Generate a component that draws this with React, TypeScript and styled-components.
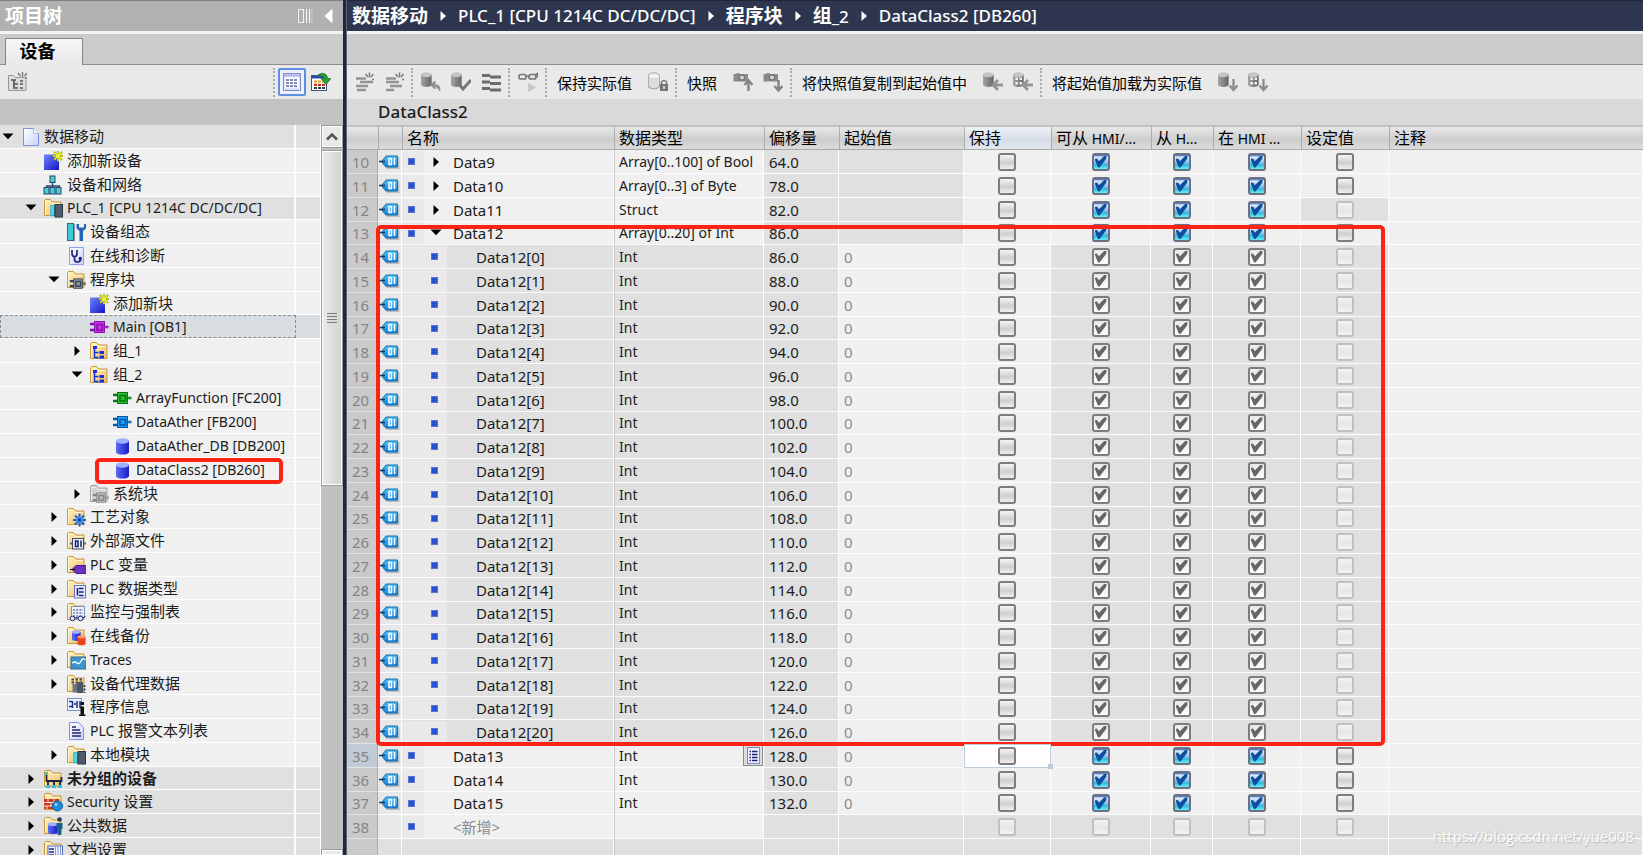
import React from "react";
import styled, { createGlobalStyle, css } from "styled-components";

const GlobalStyle = createGlobalStyle`
  * { box-sizing: border-box; }
  body {
    margin: 0;
    font-family: "Noto Sans", "Noto Sans CJK SC", sans-serif;
    font-size: 14px;
    color: #1c1c1c;
    background: #e0e0e0;
  }
  button {
    margin: 0;
    padding: 0;
    border: 0;
    background: none;
    font: inherit;
    color: inherit;
  }
  svg { display: block; flex: none; }
`;

/* ---------- frame ---------- */

const Shell = styled.div`
  display: grid;
  grid-template-columns: 343px 4px minmax(0, 1fr);
  height: 100vh;
  overflow: hidden;
`;

const Divider = styled.div`
  background: #1e2740;
  border-right: 1px solid #5d6474;
`;

const Pane = styled.div`
  display: flex;
  flex-direction: column;
  min-width: 0;
  min-height: 0;
  overflow: hidden;
`;

const TitleBar = styled.header<{ $dark?: boolean }>`
  display: flex;
  align-items: center;
  flex: none;
  height: 34px;
  padding: 0 10px 0 5px;
  border-top: 1px solid ${(p) => (p.$dark ? "#1f2638" : "#7f8089")};
  border-bottom: 3px solid #f3f3f3;
  background: ${(p) => (p.$dark ? "#2e364f" : "#b1b1b1")};
  color: #fff;
  font-size: 17px;
  white-space: nowrap;
`;

const PaneTitle = styled.h1`
  flex: 1;
  margin: 0;
  font-size: 19px;
  line-height: 26px;
  font-weight: 700;
`;

const TitleTools = styled.div`
  display: flex;
  align-items: center;
  gap: 11px;
`;

const TabStrip = styled.div`
  display: flex;
  align-items: flex-end;
  flex: none;
  height: 31px;
  padding-left: 5px;
  background: #cbcbcb;
  border-bottom: 1px solid #8e8e8e;
`;

const Tab = styled.button`
  width: 78px;
  height: 27px;
  margin-bottom: -1px;
  padding: 0 13px 2px 0;
  border: 1px solid #858585;
  border-bottom: 0;
  background: linear-gradient(#f6f6f6, #e9e9e9);
  color: #000;
  font-size: 18px;
  line-height: 24px;
  font-weight: 700;
`;

const Toolbar = styled.div`
  display: flex;
  align-items: center;
  flex: none;
  height: 34px;
  padding: 0 2px;
  background: #e9e9e9;
  font-size: 15px;
  white-space: nowrap;
`;

const ToolButton = styled.button<{ $active?: boolean }>`
  display: grid;
  place-items: center;
  flex: none;
  width: ${(p) => (p.$active ? "28px" : "30px")};
  height: 28px;
  border: ${(p) => (p.$active ? "2px solid #5f8fe0" : "0")};
  border-radius: 2px;
  background: ${(p) => (p.$active ? "#eef1fb" : "none")};
`;

const ToolSeparator = styled.span`
  flex: none;
  width: 1px;
  height: 29px;
  margin: 0 3px 0 2px;
  border-left: 2px dotted #a9a9a9;
`;

const ToolText = styled.span`
  padding: 2px 11px 0 7px;
  line-height: 22px;
  color: #000;
`;

const Spacer = styled.span`
  flex: 1;
`;

const ToolbarEnd = styled.span`
  flex: none;
  width: 5px;
`;

const Band = styled.div<{ $light?: boolean }>`
  flex: none;
  height: 26px;
  padding-left: 31px;
  background: ${(p) => (p.$light ? "#d9d9d9" : "#c2c2c2")};
  font-size: 17px;
  line-height: 26px;
  font-weight: 500;
`;

const Cjk = styled.span<{ $size: number }>`
  font-size: ${(p) => p.$size}px;
`;

/* Chinese runs are set slightly larger than the Latin runs beside them. */
function MixedText({ text, size }: { text: string; size: number }) {
  return (
    <>
      {text.split(/([\u4e00-\u9fff]+)/).map((run, i) =>
        i % 2 ? (
          <Cjk key={i} $size={size}>
            {run}
          </Cjk>
        ) : (
          run
        ),
      )}
    </>
  );
}

/* ---------- icons ---------- */

const Svg = ({ children, w = 20, h = 20 }: { children: React.ReactNode; w?: number; h?: number }) => (
  <svg width={w} height={h} viewBox={`0 0 ${w} ${h}`} aria-hidden="true">
    {children}
  </svg>
);

const CaretRight = ({ color = "#000" }: { color?: string }) => (
  <Svg w={12} h={12}>
    <path d="M3.5 1L9 6 3.5 11z" fill={color} />
  </Svg>
);
const CaretDown = () => (
  <Svg w={12} h={12}>
    <path d="M.5 2.500h11L6 8.300z" fill="#000" />
  </Svg>
);

const HiddenSvg = styled.svg`
  position: absolute;
`;

const Defs = () => (
  <HiddenSvg width="0" height="0" aria-hidden="true">
    <defs>
      <linearGradient id="folder" x1="0" y1="0" x2="1" y2="1">
        <stop offset="0" stopColor="#fff0bd" />
        <stop offset="1" stopColor="#ecc065" />
      </linearGradient>
      <linearGradient id="blue" x1="0" y1="0" x2="1" y2="1">
        <stop offset="0" stopColor="#6f86ff" />
        <stop offset="1" stopColor="#1414c4" />
      </linearGradient>
      <linearGradient id="cylinder" x1="0" y1="0" x2="1" y2="0">
        <stop offset="0" stopColor="#5a6cf5" />
        <stop offset="1" stopColor="#1a1ec8" />
      </linearGradient>
      <linearGradient id="grey" x1="0" y1="0" x2="1" y2="0">
        <stop offset="0" stopColor="#a5a5a5" />
        <stop offset="1" stopColor="#666" />
      </linearGradient>
      <linearGradient id="page" x1="0" y1="0" x2="1" y2="1">
        <stop offset="0" stopColor="#fff" />
        <stop offset="1" stopColor="#c9d2fb" />
      </linearGradient>
      <linearGradient id="tag" x1="0" y1="0" x2="0" y2="1">
        <stop offset="0" stopColor="#4ec3f7" />
        <stop offset="1" stopColor="#0f7fdc" />
      </linearGradient>
    </defs>
  </HiddenSvg>
);

const Folder = ({ children, grey }: { children?: React.ReactNode; grey?: boolean }) => (
  <Svg>
    <path
      d="M1.500 17.500v-15l1-1h5l2 2.500h8.500v13.500z"
      fill={grey ? "#d2d2d2" : "url(#folder)"}
      stroke={grey ? "#a2a2a2" : "#c9983a"}
    />
    <path d="M2.500 16.500v-13h4.500l2 2h8" fill="none" stroke={grey ? "#ececec" : "#fff6d2"} />
    {children}
  </Svg>
);

/* Program block: a thick frame with two pins on the left and one on the right. */
const Block = ({ a, b }: { a: string; b: string }) => (
  <>
    <path d="M1 7h5M1 13h5M15 10h4.500" stroke={b} strokeWidth="2.600" />
    <path d="M15 10h4" stroke={a} strokeWidth="1" />
    <rect x="5" y="4" width="11" height="12" fill={b} />
    <rect x="6" y="5" width="9" height="10" fill={a} />
    <rect x="8" y="7.500" width="5.500" height="5.500" fill={a} stroke={b} strokeWidth="1.600" />
  </>
);

const Cylinder = ({ x = 0, y = 0, fill = "url(#cylinder)", top = "#9fb0ff" }) => (
  <g transform={`translate(${x} ${y})`}>
    <path d="M0 2.500v11.500c0 1.500 2.700 2.600 6.500 2.600S13 15.500 13 14V2.500z" fill={fill} />
    <ellipse cx="6.500" cy="3" rx="6.500" ry="2.700" fill={top} />
  </g>
);

const Spark = ({ x, y }: { x: number; y: number }) => (
  <g transform={`translate(${x} ${y})`}>
    <path d="M0-5v10.500M-5.500 0h10.500M-4-4l8 8M4-4l-8 8" stroke="#8b9a00" strokeWidth="2" />
    <path d="M0-4.500v9.500M-5 0h9.500M-3.500-3.500l7 7M3.500-3.500l-7 7" stroke="#f6f23c" strokeWidth="1.200" />
  </g>
);

const Module = () => (
  <>
    <rect x="7" y="7" width="6" height="11.500" fill="#2b8f98" stroke="#d8eef0" strokeWidth=".6" />
    <rect x="8" y="8" width="3" height="9.500" fill="#4fd6de" />
    <rect x="12" y="6.500" width="7.500" height="12.500" fill="#4f5b6d" stroke="#2c3543" />
  </>
);

const icons: Record<string, React.ReactNode> = {
  project: (
    <Svg>
      <path d="M3.500 1.500h10l5 5v12h-15z" fill="url(#page)" stroke="#7f8fe6" />
      <path d="M13.500 1.500v5h5" fill="#fff" stroke="#a8b4f0" />
    </Svg>
  ),
  add: (
    <Svg>
      <rect x="1" y="3.500" width="15" height="15.500" fill="url(#blue)" />
      <Spark x={15} y={5} />
    </Svg>
  ),
  network: (
    <Svg>
      <path d="M9.500 6v5M3.500 14v-3h13v3M9.500 11v3" fill="none" stroke="#30456b" strokeWidth="1.300" />
      {[[7, 1], [1, 12.5], [7, 12.5], [13, 12.5]].map(([x, y]) => (
        <rect key={`${x}-${y}`} x={x} y={y} width="5" height="6.500" fill="#47cfd8" stroke="#2c4268" />
      ))}
    </Svg>
  ),
  plc: (
    <Folder>
      <Module />
    </Folder>
  ),
  config: (
    <Svg>
      <rect x="1.500" y="1.500" width="6" height="17" fill="#3bc9d3" stroke="#35687c" />
      <path d="M8.500 2v17" stroke="#8a98a5" />
      <path d="M10.500 2v4.500l3 2.500v10h3.500V9l3-2.500V2h-2v3.500h-5V2z" fill="#2364b8" />
    </Svg>
  ),
  diagnose: (
    <Svg>
      <path d="M3.500 1.500h14v17h-14z" fill="url(#page)" stroke="#8f9dea" />
      <path d="M6 4v3.500q0 3 2.500 3t2.500-3V4M8.500 10.500v3q0 2.500 3 2.500t3-3" fill="none" stroke="#20247e" strokeWidth="1.700" />
      <circle cx="14.300" cy="12.500" r="1.700" fill="#20247e" />
    </Svg>
  ),
  blocks: (
    <Folder>
      <g transform="translate(3 5) scale(.86)">
        <Block a="#8b96a4" b="#39434f" />
      </g>
    </Folder>
  ),
  main: (
    <Svg>
      <Block a="#d02df2" b="#8712a8" />
    </Svg>
  ),
  fc: (
    <Svg>
      <Block a="#28c22f" b="#12701a" />
    </Svg>
  ),
  fb: (
    <Svg>
      <Block a="#1f9df5" b="#0a55a8" />
    </Svg>
  ),
  db: (
    <Svg>
      <Cylinder x={4} y={2} />
    </Svg>
  ),
  group: (
    <Folder>
      <path d="M5.500 7v9.500h4M5.500 11.500h4" fill="none" stroke="#1a2fe0" strokeWidth="1.500" />
      <path d="M4 6.500h4M10.500 11.500h4.500M10.500 16h4.500" stroke="#1a2fe0" strokeWidth="3" />
    </Folder>
  ),
  system: (
    <Folder grey>
      <g transform="translate(3 5) scale(.86)">
        <Block a="#bdbdbd" b="#858585" />
      </g>
    </Folder>
  ),
  tech: (
    <Folder>
      <path d="M13.500 6.500v13M7 13h13M9 8.500l9 9M18 8.500l-9 9" stroke="#1d62cf" strokeWidth="2" />
      <circle cx="13.500" cy="13" r="3.600" fill="#3b8cf0" />
      <circle cx="13.500" cy="13" r="1.400" fill="#0c2f7a" />
    </Folder>
  ),
  source: (
    <Folder>
      <path d="M4 12.500h16" stroke="#56617a" strokeWidth="2" />
      <rect x="6.500" y="7.500" width="11" height="10.500" fill="#e8edfa" stroke="#3e4a68" />
      <path d="M9.500 10v5.500h2.500V10zM15 9.500v6.500" fill="none" stroke="#1c2569" strokeWidth="1.500" />
    </Folder>
  ),
  tags: (
    <Folder>
      <path d="M6 14.500l4-4h10v8H10z" fill="#6a31c2" stroke="#4a1b93" />
      <path d="M4 14.500h5" stroke="#111" />
    </Folder>
  ),
  types: (
    <Folder>
      <rect x="8.500" y="6.500" width="11" height="12.500" fill="#e3e8ff" stroke="#6673c8" />
      <path d="M11.500 9v7.500M13 9.500h4.500M13 13h4.500M13 16.500h4.500" stroke="#1b2270" strokeWidth="1.600" />
    </Folder>
  ),
  watch: (
    <Folder>
      <rect x="5.500" y="4.500" width="13" height="11" fill="#eef1fb" stroke="#8791b8" />
      <path d="M7 8h10M7 11h10M7 14h10" stroke="#6a76b0" strokeDasharray="2 1.200" strokeWidth="1.500" />
      <circle cx="6.500" cy="16.500" r="2.300" fill="#dfe6ff" stroke="#24307c" />
      <circle cx="14.500" cy="16.500" r="2.300" fill="#dfe6ff" stroke="#24307c" />
      <path d="M9 16h3M17 15.500l2.500-1" stroke="#24307c" />
    </Folder>
  ),
  backup: (
    <Folder>
      <g transform="translate(6 4) scale(.66)">
        <Cylinder />
      </g>
      <g transform="translate(11.500 9) scale(.62)">
        <Cylinder fill="#e8461a" top="#ff9a6a" />
      </g>
    </Folder>
  ),
  traces: (
    <Folder>
      <rect x="5" y="7" width="15" height="12" fill="#3f93cc" stroke="#2b6f9f" />
      <path d="M6 13q3-2 5 0t4-2 4.500-1" fill="none" stroke="#fff" strokeWidth="1.300" />
    </Folder>
  ),
  proxy: (
    <Folder>
      <path d="M5.500 5.500h11M5.500 8.500h11" stroke="#39434f" strokeWidth="1.800" strokeDasharray="2.500 1.500" />
      <rect x="6.500" y="10" width="4.500" height="8.500" fill="#6b7685" />
      <rect x="11" y="8" width="6" height="11" fill="#4a5565" />
      <path d="M18.500 11v8" stroke="#39434f" strokeWidth="1.800" strokeDasharray="2 1.500" />
    </Folder>
  ),
  info: (
    <Svg>
      <rect x="1.500" y="1.500" width="14" height="12" fill="#eaf0ff" stroke="#7e93c9" />
      <path d="M3 4.500h3M3 9.500h3M6.500 4v7M8 7h2M11 4v7M14 4v6" stroke="#1f2d86" strokeWidth="1.500" />
      <path d="M13.500 9.500h4.500v8h1.500V19h-6.500v-1.500H14.500v-6h-1zM14.500 5h3.500v3h-3.500z" fill="#111" />
    </Svg>
  ),
  textlist: (
    <Svg>
      <path d="M3.500 1.500h9l5 5v12h-14z" fill="url(#page)" stroke="#7f8fe6" />
      <path d="M6 6h4M6 9h8M6 12h9M6 15h9" stroke="#1d256f" strokeWidth="1.600" />
    </Svg>
  ),
  modules: (
    <Folder>
      <Module />
    </Folder>
  ),
  ungrouped: (
    <Folder>
      <path d="M3.500 4v8h15V8M5 12v4M11 12v4M17 12v4" fill="none" stroke="#1b2444" strokeWidth="1.800" />
      <path d="M3 17.500h4M9 17.500h4M15 17.500h4M2 4.500h3" stroke="#3cc3d0" strokeWidth="3" />
    </Folder>
  ),
  security: (
    <Folder>
      <rect x="1" y="7" width="15" height="10" fill="#c9371f" />
      <path d="M1 10.500h15M1 14h15M5 7v3M11 7v3M8 11v3M4 14v3M11 14v3" stroke="#f5e3da" />
      <circle cx="14.500" cy="14" r="5" fill="#1c8ddb" stroke="#0c5ea0" />
      <circle cx="13" cy="12.500" r="1.600" fill="#8ed2ff" />
    </Folder>
  ),
  common: (
    <Folder>
      <g transform="translate(5 6) scale(.74)">
        <Cylinder />
      </g>
      <circle cx="16.500" cy="3.500" r="2.200" fill="#23374f" />
      <path d="M13.500 7h6v6h-1.200v6h-3.600v-6h-1.200z" fill="#17608f" />
    </Folder>
  ),
  docs: (
    <Folder>
      <rect x="5" y="6" width="14.500" height="12.500" fill="#eef1ff" stroke="#5868b8" />
      <path d="M6 9h5M6 12h5M6 15h5" stroke="#232c80" strokeWidth="1.600" />
      <path d="M12.500 7v11M15 7v11M17.500 7v11" stroke="#8d99d4" />
    </Folder>
  ),
};

const NewFolderIcon = () => (
  <Svg>
    <path d="M1.500 18.500v-15h5l2 2h10.500v13z" fill="#dedede" stroke="#979797" />
    <path d="M4 8h5M7 8v8h4M7 12h4M13 9h3M13 12h3M13 16h3" fill="none" stroke="#555" strokeWidth="1.700" />
    <path d="M15.500 0v5M11 1l2.500 3M20 1l-2.500 3M18.500 6h1.500" stroke="#777" strokeWidth="1.400" />
  </Svg>
);
const ListViewIcon = () => (
  <Svg>
    <rect x="1.500" y="1.500" width="17" height="17" fill="#dfe4fa" stroke="#7b8bd0" />
    <path d="M2 3.500h16" stroke="#aab4e4" strokeWidth="2" />
    <rect x="3" y="5.500" width="14" height="10" fill="#fff" />
    <path d="M4 8h12M4 11h12M4 14h12" stroke="#5a659c" strokeWidth="1.300" strokeDasharray="3 1" />
  </Svg>
);
const ExportIcon = () => (
  <Svg>
    <rect x=".5" y="3.500" width="15" height="15" fill="#fff" stroke="#34548c" />
    <path d="M1 5h14" stroke="#2c4f9a" strokeWidth="3" />
    <path d="M3 9.500h11" stroke="#e8a02c" strokeWidth="2.200" strokeDasharray="3 1" />
    <path d="M3 12.800h11" stroke="#c2381d" strokeWidth="2.200" strokeDasharray="3 1" />
    <path d="M3 16h11" stroke="#3c3c3c" strokeWidth="2.200" strokeDasharray="3 1" />
    <path d="M7 3q7-5 10 3.500h3l-5 6-5-6h3q-1-3-6-3.500z" fill="#2c9c3a" stroke="#176b25" strokeWidth=".7" />
  </Svg>
);
const RowInsertIcon = ({ lower }: { lower?: boolean }) => (
  <Svg>
    <path
      d={lower ? "M2 6.500h10M2 10h13M6 14h12M2 18h8" : "M2 6.500h10M6 10h13M2 14h12M3 18h9"}
      stroke="#939393"
      strokeWidth="2.600"
    />
    <path d="M15.500.500v5M11.500 2l2.500 3M19.500 2l-2.500 3M18 7.500h2" stroke="#7b7b7b" strokeWidth="1.500" />
  </Svg>
);
const GreyDb = ({ children, pale, dots }: { children?: React.ReactNode; pale?: boolean; dots?: boolean }) => (
  <Svg>
    <g transform={pale ? "translate(0 0) scale(.92 1.050)" : "translate(0 0) scale(.82 .9)"}>
      <Cylinder fill={pale ? "#dcdcdc" : "url(#grey)"} top={pale ? "#f3f3f3" : "#c4c4c4"} />
      {pale && (
        <path d="M.5 3v11q6 4 12 0V3M.5 3q6-4.500 12 0" fill="none" stroke="#a8a8a8" />
      )}
      {dots && <path d="M3 7.500h3M3 12.500h3M8 7.500h3M8 12.500h3" stroke="#f2f2f2" strokeWidth="2.600" />}
    </g>
    {children}
  </Svg>
);
const ArrowDown = <path d="M15.500 7v10M11.500 13.500l4 4.500 4-4.500" stroke="#8c8c8c" strokeWidth="2.300" fill="none" />;
const ArrowLeft = <path d="M20 13h-8M15 8l-5 5 5 5" stroke="#949494" strokeWidth="2.800" fill="none" />;
const Lines = () => (
  <Svg>
    <path d="M1 3.500h8M9 5h11M1 10h8M9 11.500h11M1 16.500h8M9 18h11" stroke="#6c6c6c" strokeWidth="3" />
  </Svg>
);
const Glasses = () => (
  <Svg>
    <rect x="1" y="2.500" width="7" height="4.500" rx="2" fill="none" stroke="#777" strokeWidth="1.700" />
    <rect x="11" y="2.500" width="7" height="4.500" rx="2" fill="none" stroke="#777" strokeWidth="1.700" />
    <path d="M8 4h3M17 3l2.500-1.500v4" stroke="#777" strokeWidth="1.500" fill="none" />
    <path d="M10.500 11.500l7 4-7 4z" fill="#c8c8c8" stroke="#b4b4b4" strokeWidth=".5" />
  </Svg>
);
const Camera = ({ up }: { up?: boolean }) => (
  <Svg>
    <path d="M.5 2h3V1h3v1h8.500v7.500H.5z" fill="#8a8a8a" />
    <circle cx="9" cy="5.500" r="2.600" fill="#d5d5d5" stroke="#606060" />
    <path
      d={up ? "M15.500 19V9M11.500 13l4-4.500 4 4.500" : "M15.500 8v10M11.500 14l4 4.500 4-4.500"}
      fill="none"
      stroke="#858585"
      strokeWidth="2.500"
    />
  </Svg>
);
const TagIcon = () => (
  <Svg w={22} h={14}>
    <path d="M8 1.500h12.500v11.500H8L3.500 8.500v-2z" fill="#7e8a94" opacity=".45" transform="translate(1 1)" />
    <path d="M8 1h11.500v11H8L3.500 6.500z" fill="url(#tag)" stroke="#1d6fae" />
    <path d="M1 6.500h6" stroke="#123a5c" strokeWidth="1.500" />
    <path d="M11 3.500h2.500v6H11zM16.500 3v7" fill="none" stroke="#fff" strokeWidth="1.500" />
  </Svg>
);
const TypePickerIcon = () => (
  <Svg w={13} h={17}>
    <rect x=".5" y=".5" width="12" height="16" fill="#eef0ff" stroke="#7a86dc" />
    <path d="M5 4.500h5.500M5 7.500h5.500M5 10.500h5.500M5 13.500h5.500M2.500 4.500h1.500M2.500 7.500h1.500M2.500 10.500h1.500M2.500 13.500h1.500" stroke="#1c2470" strokeWidth="1.500" />
  </Svg>
);

/* ---------- project tree ---------- */

type Node = {
  label: string;
  icon: string;
  level: number;
  open?: boolean;
  shade?: boolean;
  bold?: boolean;
  selected?: boolean;
  marked?: boolean;
};

const nodes: Node[] = [
  { label: "数据移动", icon: "project", level: 0, open: true, shade: true },
  { label: "添加新设备", icon: "add", level: 1 },
  { label: "设备和网络", icon: "network", level: 1 },
  { label: "PLC_1 [CPU 1214C DC/DC/DC]", icon: "plc", level: 1, open: true, shade: true },
  { label: "设备组态", icon: "config", level: 2 },
  { label: "在线和诊断", icon: "diagnose", level: 2 },
  { label: "程序块", icon: "blocks", level: 2, open: true },
  { label: "添加新块", icon: "add", level: 3 },
  { label: "Main [OB1]", icon: "main", level: 3, selected: true },
  { label: "组_1", icon: "group", level: 3, open: false },
  { label: "组_2", icon: "group", level: 3, open: true },
  { label: "ArrayFunction [FC200]", icon: "fc", level: 4 },
  { label: "DataAther [FB200]", icon: "fb", level: 4 },
  { label: "DataAther_DB [DB200]", icon: "db", level: 4 },
  { label: "DataClass2 [DB260]", icon: "db", level: 4, marked: true },
  { label: "系统块", icon: "system", level: 3, open: false },
  { label: "工艺对象", icon: "tech", level: 2, open: false },
  { label: "外部源文件", icon: "source", level: 2, open: false },
  { label: "PLC 变量", icon: "tags", level: 2, open: false },
  { label: "PLC 数据类型", icon: "types", level: 2, open: false },
  { label: "监控与强制表", icon: "watch", level: 2, open: false },
  { label: "在线备份", icon: "backup", level: 2, open: false },
  { label: "Traces", icon: "traces", level: 2, open: false },
  { label: "设备代理数据", icon: "proxy", level: 2, open: false },
  { label: "程序信息", icon: "info", level: 2 },
  { label: "PLC 报警文本列表", icon: "textlist", level: 2 },
  { label: "本地模块", icon: "modules", level: 2, open: false },
  { label: "未分组的设备", icon: "ungrouped", level: 1, open: false, shade: true, bold: true },
  { label: "Security 设置", icon: "security", level: 1, open: false, shade: true },
  { label: "公共数据", icon: "common", level: 1, open: false, shade: true },
  { label: "文档设置", icon: "docs", level: 1, open: false, shade: true },
];

const TreeArea = styled.div`
  display: flex;
  flex: 1;
  min-height: 0;
  background: #f0f0f0;
`;

const Tree = styled.ul`
  flex: 1;
  min-width: 0;
  margin: 0;
  padding: 0;
  list-style: none;
  overflow: hidden;
`;

const TreeRow = styled.li<{ $shade?: boolean; $selected?: boolean }>`
  position: relative;
  display: grid;
  grid-template-columns: minmax(0, 1fr) 24px;
  height: 24px;
  border-bottom: 1px solid #fff;
  background: ${(p) => (p.$selected ? "#d7dde1" : p.$shade ? "#e0e0e0" : "#f0f0f0")};
  &:nth-child(4n) { height: 23px; }
`;

const TreeCell = styled.div<{ $level: number; $selected?: boolean }>`
  display: flex;
  align-items: center;
  padding-left: ${(p) => p.$level * 23}px;
  border-right: 2px solid #fcfcfc;
  white-space: nowrap;
  ${(p) =>
    p.$selected &&
    css`
      outline: 1px dashed #8b8b8b;
      outline-offset: -1px;
      border-right-color: transparent;
    `}
`;

const Toggle = styled.button`
  display: grid;
  place-items: center;
  flex: none;
  width: 15px;
  height: 20px;
`;

const TogglePlace = styled.span`
  flex: none;
  width: 15px;
`;

const TreeLabel = styled.a<{ $bold?: boolean }>`
  display: flex;
  align-items: center;
  gap: 4px;
  padding-left: 5px;
  line-height: 22px;
  color: #1c1c1c;
  font-weight: ${(p) => (p.$bold ? 700 : 400)};
  text-decoration: none;
`;

const Marker = styled.div`
  position: absolute;
  border: 4px solid #fd2314;
  border-radius: 5px;
  pointer-events: none;
`;

const RowMarker = styled(Marker)`
  inset: 0 37px -3px 95px;
  z-index: 1;
`;

const Scrollbar = styled.div`
  display: flex;
  flex-direction: column;
  flex: none;
  width: 23px;
  border-left: 1px solid #fff;
  background: #c1c1c1;
`;

const ScrollButton = styled.button`
  display: grid;
  place-items: center;
  height: 23px;
  flex: none;
  border: 1px solid #9c9c9c;
  box-shadow: inset 0 0 0 1px #fff;
  background: #e9e9e9;
`;

const Thumb = styled.div`
  display: grid;
  place-items: center;
  flex: 0 0 46%;
  margin-top: 2px;
  border: 1px solid #9c9c9c;
  box-shadow: inset 0 0 0 1px #fff;
  background: linear-gradient(90deg, #e9e9e9, #d3d3d3);
`;

const TrackRest = styled.div`
  flex: 1;
`;

/* Bottom button of the scroll bar, cut by the window edge. */
const BottomButton = styled(ScrollButton)`
  height: 6px;
  border-bottom: 0;
`;

function ProjectTree() {
  return (
    <Pane>
      <TitleBar>
        <PaneTitle>项目树</PaneTitle>
        <TitleTools>
          <button aria-label="布局">
            <Svg w={16} h={16}>
              <path d="M1.500 1.500h5v13h-5zM9.500 1v14M12.500 1v14" fill="none" stroke="#f4f4f4" />
              <path d="M15 1v14" stroke="#d0d0d0" />
            </Svg>
          </button>
          <button aria-label="折叠">
            <Svg w={9} h={16}>
              <path d="M8.500.500v15L.5 8z" fill="#fff" />
            </Svg>
          </button>
        </TitleTools>
      </TitleBar>
      <TabStrip>
        <Tab>设备</Tab>
      </TabStrip>
      <Toolbar>
        <ToolButton aria-label="新建组">
          <NewFolderIcon />
        </ToolButton>
        <Spacer />
        <ToolSeparator />
        <ToolButton $active aria-label="列表视图">
          <ListViewIcon />
        </ToolButton>
        <ToolButton aria-label="导出">
          <ExportIcon />
        </ToolButton>
        <ToolbarEnd />
      </Toolbar>
      <Band />
      <TreeArea>
        <Tree>
          {nodes.map((n) => (
            <TreeRow key={n.label} $shade={n.shade} $selected={n.selected}>
              <TreeCell $level={n.level} $selected={n.selected}>
                {n.open === undefined ? (
                  <TogglePlace />
                ) : (
                  <Toggle aria-label={n.label} aria-expanded={n.open}>
                    {n.open ? <CaretDown /> : <CaretRight />}
                  </Toggle>
                )}
                <TreeLabel href="#" $bold={n.bold}>
                  {icons[n.icon]}
                  <span>
                    <MixedText text={n.label} size={15} />
                  </span>
                </TreeLabel>
              </TreeCell>
              {n.marked && <RowMarker />}
            </TreeRow>
          ))}
        </Tree>
        <Scrollbar>
          <ScrollButton aria-label="向上">
            <Svg w={12} h={9}>
              <path d="M1 7.500l5-5 5 5" fill="none" stroke="#555" strokeWidth="2.600" />
            </Svg>
          </ScrollButton>
          <Thumb>
            <Svg w={12} h={11}>
              <path d="M1 1.500h10M1 4.500h10M1 7.500h10M1 10.500h10" stroke="#7c7c7c" />
            </Svg>
          </Thumb>
          <TrackRest />
          <BottomButton aria-label="向下" />
        </Scrollbar>
      </TreeArea>
    </Pane>
  );
}

/* ---------- breadcrumb ---------- */

const Crumbs = styled.nav`
  display: flex;
  align-items: center;
  gap: 9px;
  line-height: 26px;
`;

const Crumb = styled.a`
  color: #fff;
  font-weight: 500;
  text-decoration: none;
  & > span { font-weight: 700; }
`;

const crumbs = ["数据移动", "PLC_1 [CPU 1214C DC/DC/DC]", "程序块", "组_2", "DataClass2 [DB260]"];

/* ---------- data block table ---------- */

const TableArea = styled.div`
  position: relative;
  flex: 1;
  min-height: 0;
  overflow: hidden;
  background: #e0e0e0;
`;

const Grid = styled.table`
  width: 100%;
  table-layout: fixed;
  border-collapse: separate;
  border-spacing: 0;
`;

const Col = styled.col<{ $w?: number }>`
  width: ${(p) => (p.$w ? `${p.$w}px` : "auto")};
`;

const HeadCell = styled.th<{ $active?: boolean }>`
  height: 25px;
  padding: 0 0 0 4px;
  border-top: 2px solid #c3c3c3;
  border-bottom: 1px solid #aaa;
  border-left: 1px solid #adadad;
  background: ${(p) =>
    p.$active
      ? "linear-gradient(#eef1f6, #d6dde7 60%, #e2e7ee)"
      : "linear-gradient(#e8e8e8, #cdcdcd 60%, #dcdcdc)"};
  color: #000;
  font-size: 14px;
  line-height: 20px;
  font-weight: 400;
  text-align: left;
  white-space: nowrap;
  overflow: hidden;
  &:first-child { border-left: 0; }
`;

const BodyRow = styled.tr`
  height: 24px;
  &:nth-child(4n) { height: 23px; }
`;

const Cell = styled.td<{ $dim?: boolean; $muted?: boolean; $edge?: boolean }>`
  padding: 0 0 0 5px;
  border-right: 1px solid #fdfdfd;
  border-bottom: 1px solid #fdfdfd;
  ${(p) => p.$edge && "border-left: 1px solid #c6c6c6; padding-left: 4px;"}
  background: ${(p) => (p.$dim ? "#e0e0e0" : "#f0f0f0")};
  color: ${(p) => (p.$muted ? "#8b8b8b" : "#1c1c1c")};
  line-height: 20px;
  white-space: nowrap;
`;

const NumberCell = styled.th<{ $current?: boolean }>`
  padding: 0 0 0 5px;
  border-right: 1px solid #a9a9a9;
  border-bottom: 1px solid #e2e2e2;
  background: ${(p) => (p.$current ? "#c0cbd6" : "#cacaca")};
  color: #858585;
  font-size: 15px;
  line-height: 20px;
  font-weight: 400;
  text-align: left;
`;

const ValueCell = styled(Cell)`
  font-size: 15px;
`;

const IconCell = styled(Cell)`
  padding-left: 0;
  background: #e8e8e8;
`;

const NameCell = styled(Cell)`
  padding: 0;
`;

const NameLine = styled.div`
  display: flex;
  align-items: center;
  height: 22px;
`;

const Guide = styled.span<{ $level: number }>`
  display: flex;
  align-items: center;
  justify-content: flex-end;
  flex: none;
  align-self: stretch;
  width: ${(p) => (p.$level ? 45 : 22)}px;
  padding-right: 9px;
  background: #e9e9e9;
`;

const Bullet = styled.i`
  width: 7px;
  height: 7px;
  background: #2b50d0;
  border: 1px solid #5873d2;
`;

const ToggleSlot = styled.span`
  display: flex;
  flex: none;
  width: 29px;
  padding-left: 4px;
`;

const Name = styled.span<{ $muted?: boolean }>`
  color: ${(p) => (p.$muted ? "#8b8b8b" : "#1c1c1c")};
  font-size: 15px;
`;

const TypeLine = styled.div`
  display: flex;
  align-items: center;
  justify-content: space-between;
  height: 22px;
`;

const PickerButton = styled.button`
  display: grid;
  place-items: center;
  width: 20px;
  height: 21px;
  border: 1px solid #8d8d8d;
  background: #dcdcdc;
`;

const CheckCell = styled(Cell)<{ $current?: boolean }>`
  position: relative;
  padding: 0;
  text-align: center;
  ${(p) =>
    p.$current &&
    css`
      z-index: 1;
      background: #fff;
      outline: 1px solid #bccbd9;
      outline-offset: -1px;
      &::after {
        content: "";
        position: absolute;
        right: -3px;
        bottom: -2px;
        width: 5px;
        height: 5px;
        background: #bccbd9;
      }
    `}
`;

type BoxState = "blue" | "grey" | "empty" | "faint";

const boxLook = {
  blue: "border-color: #6a7180; background: linear-gradient(#2d5cb8, #dfeafc 2px, #a8c8f0 45%, #35b6dc 70%, #66f0f4); --tick: #0b4f9e;",
  grey: "border-color: #7d7d7d; background: linear-gradient(#e9e9e9, #fdfdfd); --tick: #666;",
  empty: "border-color: #7d7d7d; background: linear-gradient(#f6f6f6, #cfcfcf 55%, #f0f0f0); --tick: transparent;",
  faint: "border-color: #c0c0c0; background: linear-gradient(#f3f3f3, #e6e6e6 55%, #f3f3f3); --tick: transparent;",
};

const Box = styled.input<{ $state: BoxState }>`
  appearance: none;
  display: block;
  width: 18px;
  height: 18px;
  margin: 1px auto;
  border: 2px solid;
  border-radius: 3px;
  ${(p) => boxLook[p.$state]}
  &::before {
    content: "";
    display: block;
    width: 12px;
    height: 12px;
    margin: 1px;
    background: var(--tick);
    clip-path: polygon(0 30%, 20% 26%, 37% 48%, 82% 2%, 100% 4%, 98% 28%, 42% 100%, 28% 98%);
  }
`;

const TableMarker = styled(Marker)`
  top: 100px;
  left: 29px;
  width: 1009px;
  height: 521px;
`;

const Watermark = styled.span`
  position: absolute;
  right: 9px;
  bottom: 8px;
  color: #fafafa;
  font-family: "Open Sans", sans-serif;
  font-size: 15px;
  line-height: 22px;
  text-shadow: 1px 1px 1px #b8b8b8;
`;

type Variable = {
  no: number;
  name: string;
  type: string;
  offset: string;
  start: string;
  child?: boolean;
  open?: boolean;
  isNew?: boolean;
  current?: boolean;
};

const variables: Variable[] = [
  { no: 10, name: "Data9", type: "Array[0..100] of Bool", offset: "64.0", start: "", open: false },
  { no: 11, name: "Data10", type: "Array[0..3] of Byte", offset: "78.0", start: "", open: false },
  { no: 12, name: "Data11", type: "Struct", offset: "82.0", start: "", open: false },
  { no: 13, name: "Data12", type: "Array[0..20] of Int", offset: "86.0", start: "", open: true },
  ...Array.from({ length: 21 }, (_, i) => ({
    no: 14 + i,
    name: `Data12[${i}]`,
    type: "Int",
    offset: `${86 + 2 * i}.0`,
    start: "0",
    child: true,
  })),
  { no: 35, name: "Data13", type: "Int", offset: "128.0", start: "0", current: true },
  { no: 36, name: "Data14", type: "Int", offset: "130.0", start: "0" },
  { no: 37, name: "Data15", type: "Int", offset: "132.0", start: "0" },
  { no: 38, name: "<新增>", type: "", offset: "", start: "", isNew: true },
];

const columns: { title: string; w?: number }[] = [
  { title: "", w: 31 },
  { title: "", w: 24 },
  { title: "名称", w: 212 },
  { title: "数据类型", w: 150 },
  { title: "偏移量", w: 75 },
  { title: "起始值", w: 125 },
  { title: "保持", w: 87 },
  { title: "可从 HMI/...", w: 100 },
  { title: "从 H...", w: 62 },
  { title: "在 HMI ...", w: 88 },
  { title: "设定值", w: 88 },
  { title: "注释" },
];

function VariableRow({ v }: { v: Variable }) {
  const hmi: BoxState = v.isNew ? "faint" : v.child ? "grey" : "blue";
  const setpointOff = v.child || v.isNew || v.type === "Struct";
  return (
    <BodyRow>
      <NumberCell scope="row" $current={v.current}>
        {v.no}
      </NumberCell>
      <IconCell>{!v.isNew && <TagIcon />}</IconCell>
      <NameCell $dim={v.child}>
        <NameLine>
          <Guide $level={v.child ? 1 : 0}>
            <Bullet />
          </Guide>
          <ToggleSlot>
            {v.open !== undefined && (
              <Toggle aria-label={v.name} aria-expanded={v.open}>
                {v.open ? <CaretDown /> : <CaretRight />}
              </Toggle>
            )}
          </ToggleSlot>
          <Name $muted={v.isNew}>{v.name}</Name>
        </NameLine>
      </NameCell>
      <Cell $dim={v.child} $edge>
        <TypeLine>
          <span>{v.type}</span>
          {v.current && (
            <PickerButton aria-label="选择数据类型">
              <TypePickerIcon />
            </PickerButton>
          )}
        </TypeLine>
      </Cell>
      <ValueCell $dim>{v.offset}</ValueCell>
      <ValueCell $dim={v.start === ""} $muted>
        {v.start}
      </ValueCell>
      <CheckCell $dim={v.isNew} $current={v.current}>
        <Box type="checkbox" $state={v.isNew ? "faint" : "empty"} aria-label={`${v.name} 保持`} />
      </CheckCell>
      {["可从 HMI 访问", "从 HMI 可写", "在 HMI 可见"].map((label) => (
        <CheckCell key={label} $dim={v.child || v.isNew}>
          <Box type="checkbox" $state={hmi} defaultChecked={!v.isNew} aria-label={`${v.name} ${label}`} />
        </CheckCell>
      ))}
      <CheckCell $dim={setpointOff}>
        <Box type="checkbox" $state={setpointOff ? "faint" : "empty"} aria-label={`${v.name} 设定值`} />
      </CheckCell>
      <Cell $dim={v.isNew} />
    </BodyRow>
  );
}

const Tool = ({ label, children }: { label: string; children: React.ReactNode }) => (
  <ToolButton aria-label={label}>{children}</ToolButton>
);

function Editor() {
  return (
    <Pane>
      <TitleBar $dark>
        <Crumbs>
          {crumbs.map((c, i) => (
            <React.Fragment key={c}>
              {i > 0 && <CaretRight color="#fff" />}
              <Crumb href="#">
                <MixedText text={c} size={19} />
              </Crumb>
            </React.Fragment>
          ))}
        </Crumbs>
      </TitleBar>
      <TabStrip />
      <Toolbar>
        <Tool label="插入行"><RowInsertIcon /></Tool>
        <Tool label="添加行"><RowInsertIcon lower /></Tool>
        <ToolSeparator />
        <Tool label="复位起始值">
          <GreyDb>
            <path d="M13 13h3q3 0 3 6M9.500 13l4.500-4v8z" fill="#8f8f8f" stroke="#8f8f8f" strokeWidth="1" />
          </GreyDb>
        </Tool>
        <Tool label="更新接口">
          <GreyDb>
            <path d="M8 12l4 5 8-9" fill="none" stroke="#777" strokeWidth="3" />
          </GreyDb>
        </Tool>
        <Tool label="扩展模式"><Lines /></Tool>
        <ToolSeparator />
        <Tool label="全部监视"><Glasses /></Tool>
        <ToolSeparator />
        <ToolText>保持实际值</ToolText>
        <Tool label="保持实际值">
          <GreyDb pale>
            <rect x="12" y="12" width="8" height="7" fill="#777" />
            <path d="M13.500 12v-2q2.500-3 5 0v2" fill="none" stroke="#777" strokeWidth="1.500" />
            <path d="M16 14v3" stroke="#eee" strokeWidth="1.500" />
          </GreyDb>
        </Tool>
        <ToolSeparator />
        <ToolText>快照</ToolText>
        <Tool label="上传快照"><Camera up /></Tool>
        <Tool label="下载快照"><Camera /></Tool>
        <ToolSeparator />
        <ToolText>将快照值复制到起始值中</ToolText>
        <Tool label="复制全部值"><GreyDb>{ArrowLeft}</GreyDb></Tool>
        <Tool label="复制设定值"><GreyDb dots>{ArrowLeft}</GreyDb></Tool>
        <ToolSeparator />
        <ToolText>将起始值加载为实际值</ToolText>
        <Tool label="加载全部值"><GreyDb>{ArrowDown}</GreyDb></Tool>
        <Tool label="加载设定值"><GreyDb dots>{ArrowDown}</GreyDb></Tool>
      </Toolbar>
      <Band $light>DataClass2</Band>
      <TableArea>
        <Grid>
          <colgroup>
            {columns.map((c, i) => (
              <Col key={i} $w={c.w} />
            ))}
          </colgroup>
          <thead>
            <tr>
              {columns.map((c, i) => (
                <HeadCell key={i} scope="col" $active={c.title === "保持"}>
                  <MixedText text={c.title} size={16} />
                </HeadCell>
              ))}
            </tr>
          </thead>
          <tbody>
            {variables.map((v) => (
              <VariableRow key={v.no} v={v} />
            ))}
            <BodyRow>
              <NumberCell />
              {columns.slice(1).map((c, i) => (
                <Cell key={i} $dim $edge={c.title === "数据类型"} />
              ))}
            </BodyRow>
          </tbody>
        </Grid>
        <TableMarker />
        <Watermark>https://blog.csdn.net/yue008</Watermark>
      </TableArea>
    </Pane>
  );
}

export default function App() {
  return (
    <>
      <GlobalStyle />
      <Defs />
      <Shell>
        <ProjectTree />
        <Divider />
        <Editor />
      </Shell>
    </>
  );
}
